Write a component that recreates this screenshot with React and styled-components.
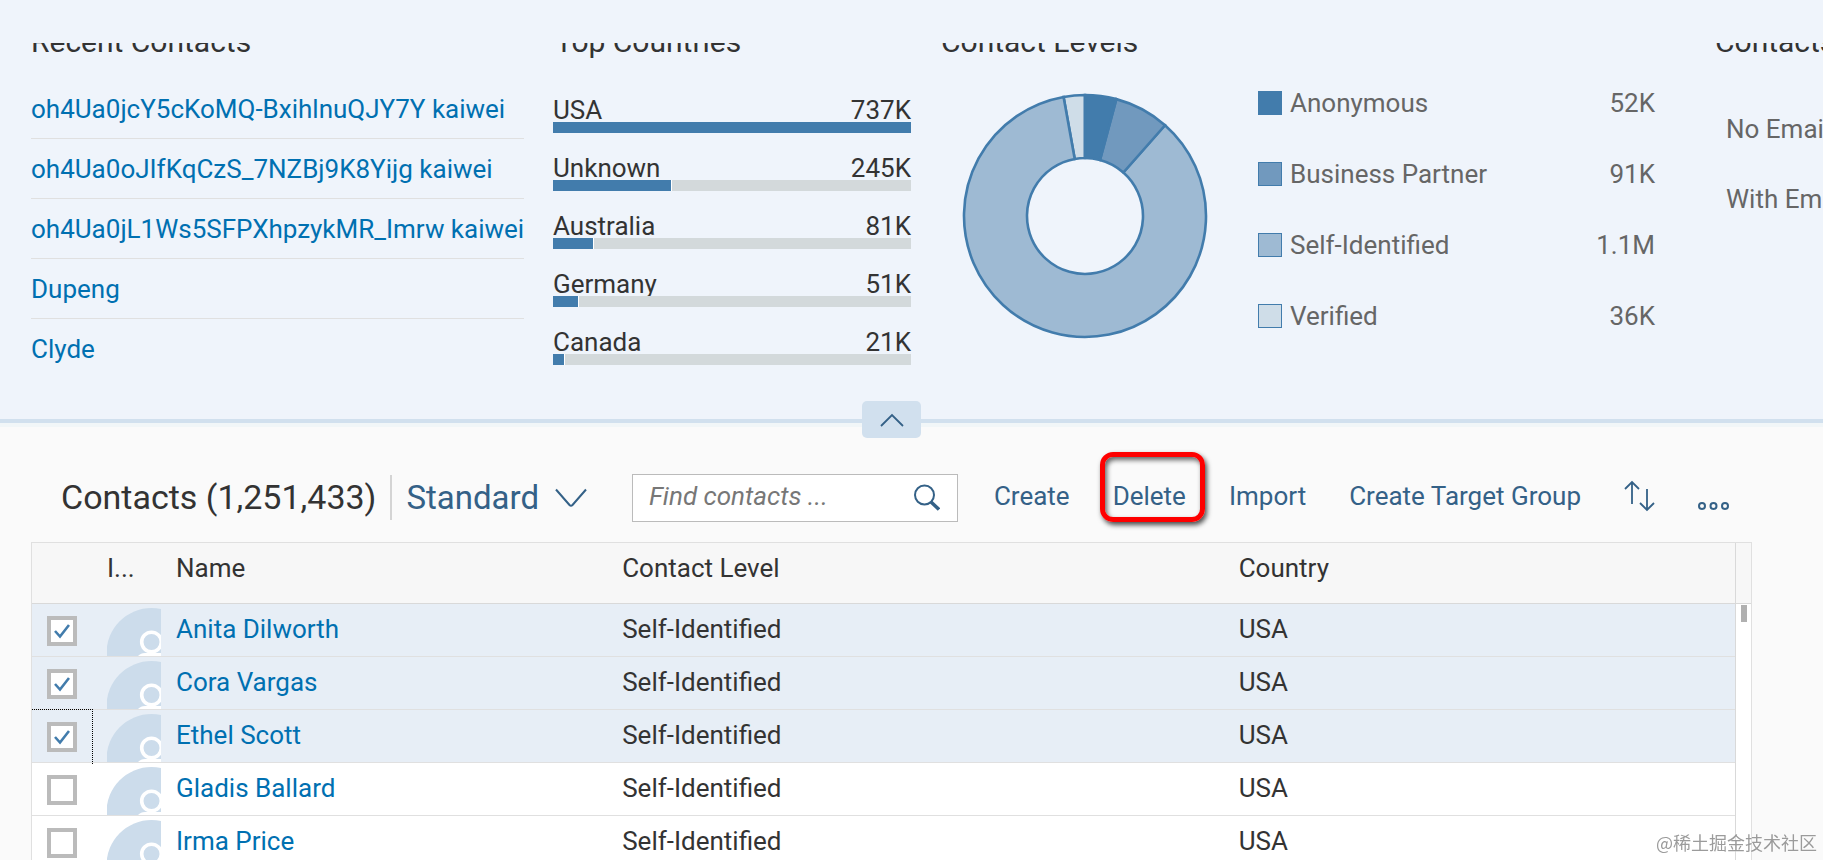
import React, { useState } from "react";
import styled, { createGlobalStyle } from "styled-components";

const c = {
  panel: "#eff4fb",
  line: "#d1e0ee",
  page: "#fafafa",
  text: "#333333",
  muted: "#666666",
  link: "#0070b1",
  action: "#346187",
  chart: "#427cac",
  grid: "#e0e0e0",
};

const Global = createGlobalStyle`
  *, *::before, *::after { box-sizing: border-box; }
  body {
    margin: 0;
    background: ${c.page};
    color: ${c.text};
    font: 26px/32px Roboto, "Liberation Sans", "Noto Sans CJK SC", sans-serif;
  }
  h2, h3, ul, dl, dd { margin: 0; padding: 0; font-weight: 400; }
  ul { list-style: none; }
  button, input { font: inherit; }
`;

const Shell = styled.div`
  display: flex;
  flex-direction: column;
  height: 100vh;
  overflow: hidden;
`;

const Overview = styled.header`
  flex: none;
  padding-top: 43px;
  background: ${c.panel};
  border-bottom: 4px solid ${c.line};
`;

const Cards = styled.div`
  display: flex;
  align-items: flex-start;
  height: 376px;
  padding-left: 31px;
  overflow: hidden;
`;

const Card = styled.section`
  flex: none;
  width: ${(p) => p.$width}px;
  margin-right: ${(p) => p.$gap || 0}px;
`;

const CardTitle = styled.h3`
  height: 32px;
  margin-top: -17px;
  padding-left: ${(p) => p.$indent || 0}px;
  font-size: 30px;
  line-height: 32px;
  white-space: nowrap;
`;

const RecentItem = styled.li`
  display: flex;
  align-items: center;
  height: 60px;
  border-bottom: 1px solid ${c.grid};
  white-space: nowrap;
  &:last-child { border-bottom: 0; }
`;

const RecentList = styled.ul`
  padding-top: 21px;
`;

const Link = styled.a`
  color: ${c.link};
  text-decoration: none;
`;

const Countries = styled.ul`
  padding-top: 37px;
`;

const Country = styled.li`
  height: 58px;
`;

const CountryText = styled.div`
  display: flex;
  justify-content: space-between;
  height: 27px;
  line-height: 30px;
`;

const Track = styled.div`
  position: relative;
  height: 11px;
  background: #d3d9db;
`;

const Fill = styled.div`
  height: 100%;
  background: ${c.chart};
  border-right: ${(p) => (p.$full ? 0 : 1)}px solid #ffffff;
`;

const LevelBody = styled.div`
  display: flex;
  padding: 35px 0 0 21px;
`;

const Legend = styled.dl`
  flex: 1;
  margin-left: 50px;
`;

const LegendRow = styled.div`
  display: flex;
  align-items: center;
  height: 71px;
  color: ${c.muted};
  dt { flex: 1; }
`;

const Swatch = styled.i`
  width: 24px;
  height: 24px;
  margin-right: 8px;
  border: 1px solid ${c.chart};
  background: ${(p) => p.$color};
`;

const LegendRows = styled.div`
  margin-top: -26px;
`;

const EmailList = styled.ul`
  padding: 36px 0 0 11px;
  color: ${c.muted};
  li { height: 70px; line-height: 70px; white-space: nowrap; }
`;

const CollapseRow = styled.div`
  display: flex;
  justify-content: center;
  flex: none;
  height: 4px;
  padding-right: 40px;
  background: #f1f6f8;
`;

const Collapse = styled.button`
  position: relative;
  z-index: 1;
  display: grid;
  place-items: center;
  width: 59px;
  height: 37px;
  margin-top: -22px;
  padding: 0;
  border: 0;
  border-radius: 5px;
  background: ${c.line};
  color: ${c.action};
`;

const Toolbar = styled.div`
  display: flex;
  align-items: center;
  flex: none;
  height: 115px;
  padding: 26px 94px 0 61px;
  white-space: nowrap;
`;

const Heading = styled.h2`
  padding-right: 14px;
  border-right: 2px solid #d4d4d4;
  font-size: 34px;
  line-height: 45px;
`;

const Variant = styled.button`
  display: flex;
  align-items: center;
  gap: 16px;
  padding: 0 0 0 14px;
  border: 0;
  background: none;
  color: ${c.action};
  font-size: 33px;
  line-height: 45px;
`;

const Search = styled.form`
  display: flex;
  align-items: center;
  width: 326px;
  height: 48px;
  margin: 0 36px 0 auto;
  padding: 0 17px 0 16px;
  border: 1px solid #bbbbbb;
  background: #ffffff;
`;

const SearchInput = styled.input`
  flex: 1;
  min-width: 0;
  padding: 0 0 4px;
  border: 0;
  outline: 0;
  background: none;
  color: ${c.text};
  &::placeholder { color: #777777; font-style: italic; opacity: 1; }
`;

const IconButton = styled.button`
  display: flex;
  padding: 0;
  border: 0;
  background: none;
  color: ${c.action};
`;

const Actions = styled.div`
  display: flex;
  align-items: center;
  gap: 43px;
  padding-bottom: 4px;
`;

const Action = styled.button`
  position: relative;
  padding: 0;
  border: 0;
  background: none;
  color: ${c.action};
`;

const Highlight = styled.span`
  position: absolute;
  inset: -28px -19px -10px -13px;
  border: 5px solid #fe0000;
  border-radius: 13px;
  box-shadow: 2px 3px 5px rgba(0, 0, 0, 0.7), inset 2px 3px 5px rgba(0, 0, 0, 0.6);
`;

const TableArea = styled.div`
  display: flex;
  flex: 1;
  min-height: 0;
  margin: 0 71px 0 31px;
  overflow: hidden;
  border: 1px solid ${c.grid};
  border-bottom: 0;
  background: #ffffff;
`;

const Table = styled.table`
  flex: 1;
  align-self: flex-start;
  table-layout: fixed;
  border-collapse: separate;
  border-spacing: 0;
`;

const Head = styled.th`
  width: ${(p) => p.$width};
  height: 61px;
  padding: 0 0 11px 14px;
  border-bottom: 1px solid #d9d9d9;
  background: #f7f7f7;
  font-weight: 400;
  text-align: left;
  white-space: nowrap;
`;

const Row = styled.tr`
  background: ${(p) => (p.$selected ? "#e7eef6" : "#ffffff")};
`;

const Cell = styled.td`
  height: 53px;
  padding: 0 0 2px 14px;
  border-bottom: 1px solid ${c.grid};
  white-space: nowrap;
`;

const CheckCell = styled(Cell)`
  position: relative;
  padding: 1px 0 0 15px;
`;

const FocusFrame = styled.span`
  position: absolute;
  inset: -1px 0 -2px 0;
  border: dotted #000000;
  border-width: 1px 1px 0 0;
  pointer-events: none;
`;

const AvatarCell = styled(Cell)`
  padding: 4px 0 0 14px;
  svg { display: block; }
`;

const CheckLabel = styled.label`
  display: grid;
  width: 30px;
  height: 30px;
  > * { grid-area: 1 / 1; }
  svg { pointer-events: none; place-self: center; }
`;

const CheckInput = styled.input`
  width: 30px;
  height: 30px;
  margin: 0;
  appearance: none;
  border: 4px solid #bbbbbb;
  background: #ffffff;
`;

const ScrollColumn = styled.div`
  flex: none;
  width: 16px;
  border-left: 1px solid #d9d9d9;
`;

const ScrollHead = styled.div`
  height: 61px;
  border-bottom: 1px solid #d9d9d9;
  background: #f7f7f7;
`;

const Thumb = styled.div`
  width: 6px;
  height: 17px;
  margin: 1px auto 0;
  background: #b0b0b0;
`;

const Watermark = styled.div`
  position: fixed;
  right: 6px;
  bottom: 6px;
  color: #9b9b9b;
  font: 18px/24px "Noto Sans CJK SC", sans-serif;
  text-shadow: 0 0 2px #ffffff;
`;

const recent = [
  "oh4Ua0jcY5cKoMQ-BxihlnuQJY7Y kaiwei",
  "oh4Ua0oJIfKqCzS_7NZBj9K8Yijg kaiwei",
  "oh4Ua0jL1Ws5SFPXhpzykMR_Imrw kaiwei",
  "Dupeng",
  "Clyde",
];

const countries = [
  ["USA", "737K", 737],
  ["Unknown", "245K", 245],
  ["Australia", "81K", 84],
  ["Germany", "51K", 53],
  ["Canada", "21K", 25],
];

const levels = [
  { name: "Anonymous", value: "52K", color: "#427cac", from: 0, to: 15 },
  { name: "Business Partner", value: "91K", color: "#7199be", from: 15, to: 41.4 },
  { name: "Self-Identified", value: "1.1M", color: "#9ebad3", from: 41.4, to: 349.8 },
  { name: "Verified", value: "36K", color: "#cfdde8", from: 349.8, to: 360 },
];

const contacts = ["Anita Dilworth", "Cora Vargas", "Ethel Scott", "Gladis Ballard", "Irma Price"];

const point = (r, deg) => {
  const a = (deg * Math.PI) / 180;
  return `${123 + r * Math.sin(a)} ${123 - r * Math.cos(a)}`;
};

const slice = ({ from, to }) => {
  const large = to - from > 180 ? 1 : 0;
  return `M${point(121, from)}A121 121 0 ${large} 1 ${point(121, to)}L${point(58, to)}A58 58 0 ${large} 0 ${point(58, from)}Z`;
};

const Donut = () => (
  <svg width="246" height="246" viewBox="0 0 246 246" role="img" aria-label="Contact levels">
    {[...levels].reverse().map((l) => (
      <path key={l.name} d={slice(l)} fill={l.color} stroke={c.chart} strokeWidth="2.6" />
    ))}
  </svg>
);

const Avatar = () => (
  <svg width="54" height="48" viewBox="0 0 54 48" aria-hidden="true">
    <circle cx="44.500" cy="45" r="45" fill="#ccdceb" />
    <circle cx="44.500" cy="34" r="9.800" fill="none" stroke="#ffffff" strokeWidth="3.600" />
    <path d="M31 48c2-2 4-3 7-3h16v3z" fill="#ffffff" />
  </svg>
);

const Tick = () => (
  <svg width="16" height="16" viewBox="0 0 16 16" fill="none" stroke={c.chart} strokeWidth="2.600" aria-hidden="true">
    <path d="M1 8l5 5.500L15 2" />
  </svg>
);

export default function App() {
  const [checked, setChecked] = useState([true, true, true, false, false]);
  const toggle = (i) => setChecked(checked.map((v, n) => (n === i ? !v : v)));

  return (
    <Shell>
      <Global />
      <Overview>
        <Cards>
          <Card $width={493} $gap={29}>
            <CardTitle>Recent Contacts</CardTitle>
            <RecentList>
              {recent.map((name) => (
                <RecentItem key={name}>
                  <Link href="#">{name}</Link>
                </RecentItem>
              ))}
            </RecentList>
          </Card>
          <Card $width={358} $gap={30}>
            <CardTitle $indent={2}>Top Countries</CardTitle>
            <Countries>
              {countries.map(([name, label, n]) => (
                <Country key={name}>
                  <CountryText>
                    <span>{name}</span>
                    <span>{label}</span>
                  </CountryText>
                  <Track>
                    <Fill $full={n === 737} style={{ width: `${(n / 737) * 100}%` }} />
                  </Track>
                </Country>
              ))}
            </Countries>
          </Card>
          <Card $width={714} $gap={60}>
            <CardTitle>Contact Levels</CardTitle>
            <LevelBody>
              <Donut />
              <Legend>
                <LegendRows>
                  {levels.map((l) => (
                    <LegendRow key={l.name}>
                      <Swatch $color={l.color} />
                      <dt>{l.name}</dt>
                      <dd>{l.value}</dd>
                    </LegendRow>
                  ))}
                </LegendRows>
              </Legend>
            </LevelBody>
          </Card>
          <Card $width={400}>
            <CardTitle>Contacts with Email</CardTitle>
            <EmailList>
              <li>No Email</li>
              <li>With Email</li>
            </EmailList>
          </Card>
        </Cards>
      </Overview>
      <CollapseRow>
        <Collapse type="button" aria-label="Collapse header">
          <svg width="24" height="14" viewBox="0 0 24 14" fill="none" stroke="currentColor" strokeWidth="1.800">
            <path d="M1 13L12 2l11 11" />
          </svg>
        </Collapse>
      </CollapseRow>
      <Toolbar>
        <Heading>Contacts (1,251,433)</Heading>
        <Variant type="button">
          Standard
          <svg width="32" height="20" viewBox="0 0 32 20" fill="none" stroke="currentColor" strokeWidth="2">
            <path d="M1 1.500l13.500 15.500q1.500 1.500 3 0L31 1.500" />
          </svg>
        </Variant>
        <Search onSubmit={(e) => e.preventDefault()}>
          <SearchInput type="text" placeholder="Find contacts ..." aria-label="Find contacts" />
          <IconButton type="submit" aria-label="Search">
            <svg width="26" height="28" viewBox="0 0 26 28" fill="none" stroke="currentColor">
              <circle cx="10.500" cy="11" r="9.500" strokeWidth="2" />
              <path d="M17 18l8 7.500" strokeWidth="3.500" />
            </svg>
          </IconButton>
        </Search>
        <Actions>
          <Action type="button">Create</Action>
          <Action type="button">
            Delete
            <Highlight />
          </Action>
          <Action type="button">Import</Action>
          <Action type="button">Create Target Group</Action>
          <IconButton type="button" aria-label="Sort">
            <svg width="31" height="32" viewBox="0 0 31 32" fill="none" stroke="currentColor" strokeWidth="1.800">
              <path d="M8 24V2M1 9l7-7 7 7M23 9v21M16 23l7 7 7-7" />
            </svg>
          </IconButton>
          <IconButton type="button" aria-label="More">
            <svg width="31" height="28" viewBox="0 0 31 28" fill="none" stroke="currentColor" strokeWidth="2">
              <circle cx="4" cy="24" r="3" />
              <circle cx="15.500" cy="24" r="3" />
              <circle cx="27" cy="24" r="3" />
            </svg>
          </IconButton>
        </Actions>
      </Toolbar>
      <TableArea>
        <Table>
          <thead>
            <tr>
              <Head $width="61px" aria-label="Select" />
              <Head $width="69px">I...</Head>
              <Head $width="26.2%">Name</Head>
              <Head $width="36.2%">Contact Level</Head>
              <Head>Country</Head>
            </tr>
          </thead>
          <tbody>
            {contacts.map((name, i) => (
              <Row key={name} $selected={checked[i]}>
                <CheckCell>
                  <CheckLabel>
                    <CheckInput
                      type="checkbox"
                      checked={checked[i]}
                      onChange={() => toggle(i)}
                      aria-label={`Select ${name}`}
                    />
                    {checked[i] && <Tick />}
                  </CheckLabel>
                  {i === 2 && <FocusFrame />}
                </CheckCell>
                <AvatarCell>
                  <Avatar />
                </AvatarCell>
                <Cell>
                  <Link href="#">{name}</Link>
                </Cell>
                <Cell>Self-Identified</Cell>
                <Cell>USA</Cell>
              </Row>
            ))}
          </tbody>
        </Table>
        <ScrollColumn>
          <ScrollHead />
          <Thumb />
        </ScrollColumn>
      </TableArea>
      <Watermark>@稀土掘金技术社区</Watermark>
    </Shell>
  );
}
